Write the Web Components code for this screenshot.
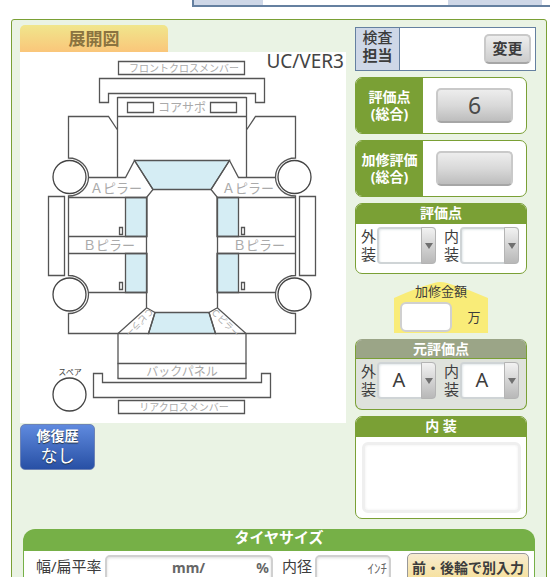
<!DOCTYPE html>
<html lang="ja">
<head>
<meta charset="utf-8">
<meta name="viewport" content="width=device-width, initial-scale=1">
<title>展開図</title>
<style>
  :root {
    --green: #7aa035;
    --pale: #eaf3e4;
    --navy: #6580a0;
    --lilac: #ced7e7;
    --ink: #3c3c3c;
  }
  html { overflow: hidden; }
  body {
    margin: 0;
    background: #fff;
    color: var(--ink);
    font-family: "Noto Sans", "Noto Sans CJK JP", sans-serif;
    font-size: 15px;
  }
</style>
</head>
<body>
<inspection-sheet></inspection-sheet>

<script>
// --- 1. HELPERS ---

function define(name, html, setup) {
    const template = document.createElement('template');
    template.innerHTML = html;
    customElements.define(name, class extends HTMLElement {
        constructor() {
            super();
            this.attachShadow({ mode: 'open' }).appendChild(template.content.cloneNode(true));
        }
        connectedCallback() {
            if (setup) setup(this, this.shadowRoot);
        }
    });
}


// --- 2. SMALL PARTS ---

// Bar of the section above
define('top-strip', `
    <style>
        :host { display: block; height: 7px; padding-left: 192px; }
        .bar {
            box-sizing: border-box; height: 7px; display: grid;
            grid-template-columns: 69px 1fr 94px 8px;
            border: solid var(--navy); border-width: 0 0 2px 2px;
        }
        .fill { background: var(--lilac); }
    </style>
    <div class="bar"><span class="fill"></span><span></span><span class="fill"></span><span></span></div>`);

// Grey bevelled button
define('bevel-button', `
    <style>
        :host { display: block; width: 77px; height: 35px; }
        :host([small]) { width: 47px; height: 30px; }
        button {
            width: 100%; height: 100%; padding: 0 0 2px;
            border: 2px solid #c9c9c9; border-bottom-color: #a6a6a6; border-radius: 5px;
            background: linear-gradient(#ededed, #d9d9d9 50%, #bdbdbd);
            color: #4a4a4a; font: 23px/24px "Noto Sans", "Noto Sans CJK JP", sans-serif;
        }
        :host([small]) button { font-size: 15px; font-weight: bold; background: linear-gradient(#eee, #ccc); color: var(--ink); }
    </style>
    <button type="button"><slot></slot></button>`,
    (host, root) => {
        if (host.hasAttribute('label')) root.querySelector('button').setAttribute('aria-label', host.getAttribute('label'));
    });

// Two line label with a drop-down
define('grade-select', `
    <style>
        :host { display: flex; align-items: flex-start; }
        label { width: 16px; font-size: 15px; line-height: 18px; word-break: break-all; }
        .box { display: grid; grid-template-columns: 1fr 15px; width: 59px; height: 37px; }
        select {
            grid-area: 1 / 1 / 2 / 3; appearance: none; box-sizing: border-box;
            width: 100%; height: 100%; margin: 0; padding: 0 15px 2px 0;
            border: 2px solid #cfd4d6; border-radius: 4px; background: #fff;
            box-shadow: inset 1px 1px 2px #e4eaec;
            color: var(--ink); font: 20px/24px "Noto Sans", sans-serif;
            text-align: center; text-align-last: center;
        }
        .arrow {
            grid-area: 1 / 2; display: grid; place-items: center; pointer-events: none; z-index: 1;
            box-sizing: border-box; border: 1px solid #b4b4b4; border-radius: 0 4px 4px 0;
            background: linear-gradient(#f2f2f2, #d4d4d4 50%, #b8b8b8);
        }
    </style>
    <label for="grade"><slot></slot></label>
    <div class="box">
        <select id="grade"></select>
        <span class="arrow"><svg width="8" height="6" viewBox="0 0 8 6"><path d="M0 0h8L4 6z" fill="#707070"/></svg></span>
    </div>`,
    (host, root) => {
        const value = host.getAttribute('value') || '';
        root.querySelector('select').add(new Option(value, value, true, true));
    });

// Card with a coloured title bar
define('title-card', `
    <style>
        :host {
            display: flex; flex-direction: column; box-sizing: border-box; min-height: 71px;
            border: 1px solid var(--green); border-radius: 7px; background: #fff; overflow: hidden;
        }
        h2 { margin: 0; height: 20px; background: var(--green); color: #fff; font-size: 14px; line-height: 17px; text-align: center; }
        .body { display: flex; gap: 8px; padding: 3px 5px; }
        :host([base]) { background: #dfe2dc; border-top-color: #9ba587; }
        :host([base]) h2 { background: #9ba587; border-bottom: 1px solid var(--green); height: 18px; }
        :host([memo]) .body { padding: 5px 5px 5px 6px; }
    </style>
    <h2></h2>
    <div class="body"><slot></slot></div>`,
    (host, root) => { root.querySelector('h2').textContent = host.getAttribute('heading'); });

// Total score: green label and a button
define('score-card', `
    <style>
        :host {
            display: grid; grid-template-columns: 67px 1fr; box-sizing: border-box; height: 57px;
            border: 1px solid var(--green); border-radius: 7px; background: #fff; overflow: hidden;
        }
        .name {
            display: grid; place-content: center; padding-bottom: 2px; background: var(--green); color: #fff;
            font-size: 14px; font-weight: bold; line-height: 17px; text-align: center;
        }
        .value { display: grid; place-items: center; }
    </style>
    <div class="name"><slot name="name"></slot></div>
    <div class="value"><slot></slot></div>`);

define('staff-box', `
    <style>
        :host {
            display: grid; grid-template-columns: 44px 1fr 47px; align-items: center; box-sizing: border-box;
            height: 44px; padding-right: 4px; border: 1px solid var(--navy); background: #fff;
        }
        .name {
            align-self: stretch; border-right: 1px solid var(--navy); background: var(--lilac);
            font-size: 15px; line-height: 18px; text-align: center; font-weight: 500;
        }
        b { display: block; }
    </style>
    <div class="name">検査<b>担当</b></div><span></span>
    <bevel-button small>変更</bevel-button>`);

define('memo-box', `
    <style>
        :host { display: block; flex: 1; }
        textarea {
            display: block; box-sizing: border-box; width: 100%; height: 71px; resize: none;
            border: 3px solid #efefef; border-radius: 6px; background: #fff; box-shadow: inset 0 0 3px #eee;
        }
    </style>
    <textarea aria-label="内装"></textarea>`);

// Repair amount on a yellow roof shape
define('repair-amount', `
    <style>
        :host { display: block; width: 94px; height: 53px; margin-left: 39px; position: relative; }
        svg { position: absolute; inset: 0; }
        .content { position: relative; display: grid; grid-template-columns: 52px 1fr; padding-left: 6px; font-size: 13px; }
        label { grid-column: 1 / 3; padding-right: 6px; line-height: 22px; text-align: center; }
        input { box-sizing: border-box; width: 52px; height: 30px; border: 2px solid #d0d0d0; border-radius: 6px; background: #fff; }
        span { line-height: 30px; text-align: center; padding-left: 8px; }
    </style>
    <svg width="94" height="53" viewBox="0 0 94 53"><path d="M0 53V18Q22 8 40 3Q46 1 53 3Q74 9 94 18V53z" fill="#f9ec78"/></svg>
    <div class="content"><label for="amount">加修金額</label><input id="amount"><span>万</span></div>`);

define('history-button', `
    <style>
        :host { display: block; }
        button {
            display: flex; flex-direction: column; align-items: center; box-sizing: border-box;
            width: 75px; height: 46px; padding: 1px 0 0; border: 1px solid #6d83b5; border-radius: 5px;
            background: linear-gradient(#5f8ade, #2850a5); color: #fff; text-shadow: 0 1px 1px #234;
            font: 17px/20px "Noto Sans CJK JP", sans-serif;
        }
        b { font-size: 14px; line-height: 19px; }
    </style>
    <button type="button"><b>修復歴</b><span>なし</span></button>`);


// --- 3. CAR DIAGRAM ---

// Left half of the car, the right half is its mirror
const halfCar = `
    <path class="glass" d="M125.5 197.5h21.5v39h-21.5zM125.5 253.5h21.5v39h-21.5z"/>
    <path d="M117.5 97V177.5M117.5 130L108.5 116.5H68.5V158A20 19 0 0 1 68.5 196V275.5A20 19 0 0 1 68.5 313.5V333.5H118"/>
    <path d="M88 177.5H125.5L134.5 160.5L153 189.5L146.5 197.5V308L118 333.5V378.5"/>
    <path d="M68.5 197.5H147M68.5 236.5H147M68.5 253.5H147M88 292.5H147"/>
    <path d="M147 308L155 312.5L148.5 333.5H118"/>
    <path d="M119.5 227.5h3v7h-3zM119.5 282.5h3v7h-3zM48.5 196.5h16v79h-16zM127.5 102.5h26v10h-26z"/>
    <circle cx="69.5" cy="177" r="16.5"/><circle cx="69.5" cy="294.5" r="16.5"/>`;

define('car-diagram', `
    <style>
        :host { display: block; position: relative; background: #fff; }
        svg { display: block; width: 100%; height: auto; }
        path, circle { fill: none; stroke: #555; stroke-width: 1.3; }
        circle { fill: #fff; stroke: #444; }
        .glass { fill: #d5edf4; }
        text { fill: #aaa; text-anchor: middle; font-family: "Noto Sans CJK JP", sans-serif; }
        .spare { fill: #444; }
        .ver { position: absolute; top: -3px; right: 2px; color: #444; font-size: 19px; line-height: 25px; }
    </style>
    <svg viewBox="20 52 326 371" role="img" aria-label="車両展開図">
        <path class="glass" d="M134.5 160.5H229.5L211 189.5H153zM155 312.5H209L215.5 333.5H148.5z"/>
        <g>${halfCar}</g>
        <g transform="translate(364 0) scale(-1 1)">${halfCar}</g>
        <path d="M118.5 61.5h126v13h-126zM118.5 400.5h126v13h-126z"/>
        <path d="M99.5 78.5H264.5V102.5H255.5V93.5H108.5V102.5H99.5z"/>
        <path d="M93.5 373.5H102.5V382.5H261.5V373.5H270.5V397.5H93.5z"/>
        <path d="M117.5 97.5H246.5M117.5 116.5H246.5M117.5 363.5H246.5M117.5 378.5H246.5"/>
        <circle cx="69.5" cy="394.5" r="16.5"/>
        <text x="184" y="72" font-size="10">フロントクロスメンバー</text>
        <text x="182" y="112" font-size="12">コアサポ</text>
        <text x="116" y="193" font-size="13">Ａピラー</text>
        <text x="248" y="193" font-size="13">Ａピラー</text>
        <text x="109" y="250" font-size="13">Ｂピラー</text>
        <text x="259" y="250" font-size="13">Ｂピラー</text>
        <text transform="translate(137 320) rotate(135)" font-size="9">Ｃピラー</text>
        <text transform="translate(223 325) rotate(45)" font-size="9">Ｃピラー</text>
        <text x="182" y="376" font-size="12">バックパネル</text>
        <text x="184" y="411" font-size="10">リアクロスメンバー</text>
        <text class="spare" x="70" y="375" font-size="8">スペア</text>
    </svg>
    <span class="ver">UC/VER3</span>`);


// --- 4. TIRE SIZE ---

define('tire-size', `
    <style>
        :host { display: block; margin: 10px 1px 0 3px; }
        h2 { margin: 0; height: 22px; border-radius: 12px 12px 0 0; background: #76b047; color: #fff; font-size: 15px; line-height: 17px; text-align: center; }
        .row { display: flex; align-items: flex-start; padding: 2px 5px 10px 12px; border: 1px solid #76b047; border-top: 0; background: #fff; }
        label { font-size: 15px; line-height: 26px; white-space: nowrap; }
        .field {
            display: flex; align-items: flex-start; box-sizing: border-box; height: 34px; margin: 2px 9px 0 3px; padding: 0 2px;
            border: 2px solid #d0d0d0; border-radius: 5px; background: #fff; box-shadow: inset 0 1px 3px #ddd;
            color: #666; font-size: 14px; line-height: 22px;
        }
        .wide { flex: 160 1 0; }
        .narrow { flex: 68 1 0; }
        input { min-width: 0; width: 0; flex: 1; border: 0; padding: 0; background: none; }
        .width { flex: 62; } .ratio { flex: 50; }
        .unit { font-weight: bold; }
        .inch { font-size: 13px; }
        button {
            width: 122px; height: 36px; margin-left: 7px; padding: 0 0 8px; white-space: nowrap;
            border: 1px solid #999; border-radius: 5px; background: linear-gradient(#f7ecd0, #f6dc8a);
            color: var(--ink); font: bold 14px/26px "Noto Sans CJK JP", sans-serif;
        }
    </style>
    <h2>タイヤサイズ</h2>
    <div class="row">
        <label for="width">幅/扁平率</label>
        <div class="field wide"><input id="width" class="width"><span class="unit">mm/</span><input class="ratio" aria-label="扁平率"><span class="unit">%</span></div>
        <label for="inner">内径</label>
        <div class="field narrow"><input id="inner"><span class="inch">ｲﾝﾁ</span></div>
        <button type="button">前・後輪で別入力</button>
    </div>`);


// --- 5. PAGE ---

define('inspection-sheet', `
    <style>
        :host { display: block; }
        main { margin: 12px 3px 0 11px; padding: 5px 10px 20px 8px; border: 1px solid var(--green); border-radius: 3px; background: var(--pale); }
        .columns { display: grid; grid-template-columns: minmax(0, 1fr) 181px; gap: 9px; }
        h1 {
            width: 148px; height: 27px; margin: 0; border-radius: 5px 5px 0 0;
            background: linear-gradient(#f0e68c, #fac67a); color: #8a7340;
            font-size: 17px; line-height: 27px; text-align: center;
        }
        .side { display: flex; flex-direction: column; gap: 6px; padding-top: 2px; }
        score-card, title-card { margin-right: 9px; }
        history-button { margin-top: 1px; }
    </style>
    <top-strip></top-strip>
    <main>
        <div class="columns">
            <section>
                <h1>展開図</h1>
                <car-diagram></car-diagram>
                <history-button></history-button>
            </section>
            <section class="side">
                <staff-box></staff-box>
                <score-card><span slot="name">評価点<br>(総合)</span><bevel-button>6</bevel-button></score-card>
                <score-card><span slot="name">加修評価<br>(総合)</span><bevel-button label="加修評価"></bevel-button></score-card>
                <title-card heading="評価点"><grade-select>外装</grade-select><grade-select>内装</grade-select></title-card>
                <repair-amount></repair-amount>
                <title-card heading="元評価点" base><grade-select value="A">外装</grade-select><grade-select value="A">内装</grade-select></title-card>
                <title-card heading="内 装" memo><memo-box></memo-box></title-card>
            </section>
        </div>
        <tire-size></tire-size>
    </main>`);
</script>
</body>
</html>
